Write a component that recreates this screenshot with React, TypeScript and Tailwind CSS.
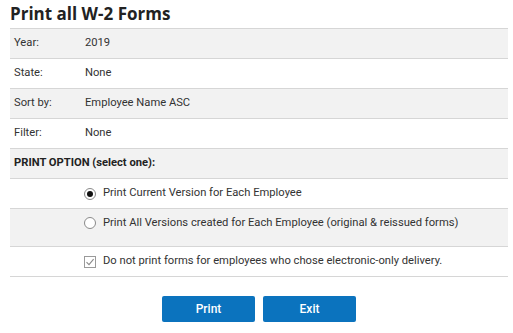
import React from 'react'

const INFO_ROWS = [
  { label: 'Year:', value: '2019' },
  { label: 'State:', value: 'None' },
  { label: 'Sort by:', value: 'Employee Name ASC' },
  { label: 'Filter:', value: 'None' },
]

function Radio({ checked }: { checked?: boolean }) {
  return (
    <span className="flex h-[12px] w-[12px] shrink-0 items-center justify-center rounded-full border border-[#8a8a8a] bg-white">
      {checked && <span className="h-[6px] w-[6px] rounded-full bg-[#111]" />}
    </span>
  )
}

function Checkbox() {
  return (
    <span className="flex h-[12px] w-[12px] shrink-0 items-center justify-center border border-[#9a9a9a] bg-white">
      <svg width="10" height="10" viewBox="0 0 10 10" fill="none">
        <path d="M1.5 5.2 L4 7.6 L8.6 2.2" stroke="#8a8a8a" strokeWidth="1.1" />
      </svg>
    </span>
  )
}

export default function App() {
  return (
    <div className="h-[333px] w-[513px] bg-white text-[#333] font-['Roboto',sans-serif] text-[11.2px]">
      <div className="ml-[10px] w-[498px]">
        <h1 className="h-[28px] pt-[4px] font-['Open_Sans',sans-serif] text-[17px] font-bold leading-[20px] text-[#222]">
          Print all W-2 Forms
        </h1>

        <div className="border-t border-[#d6d6d6]">
          {INFO_ROWS.map((r, i) => (
            <div
              key={r.label}
              className={`flex h-[30px] items-center border-b border-[#d6d6d6] px-[4px] ${i % 2 === 0 ? 'bg-[#f2f2f2]' : 'bg-white'}`}
            >
              <span className="w-[71px]">{r.label}</span>
              <span>{r.value}</span>
            </div>
          ))}

          <div className="flex h-[30px] items-center border-b border-[#d6d6d6] bg-[#f2f2f2] px-[4px] font-bold text-[#222]">
            PRINT OPTION (select one):
          </div>

          <div className="flex h-[30px] items-center gap-[7px] border-b border-[#d6d6d6] bg-white pl-[74px]">
            <Radio checked />
            <span>Print Current Version for Each Employee</span>
          </div>

          <div className="flex h-[38px] items-start gap-[7px] border-b border-[#d6d6d6] bg-[#f2f2f2] pl-[74px] pt-[7px]">
            <span className="flex h-[13px] items-center">
              <Radio />
            </span>
            <span className="leading-[13px]">Print All Versions created for Each Employee (original &amp; reissued forms)</span>
          </div>

          <div className="flex h-[30px] items-center gap-[7px] border-b border-[#d6d6d6] bg-white pl-[74px]">
            <Checkbox />
            <span>Do not print forms for employees who chose electronic-only delivery.</span>
          </div>
        </div>

        <div className="mt-[19px] flex justify-center gap-[8px]">
          <button className="h-[26px] w-[93px] rounded-[2px] bg-[#0b73be] text-[12px] font-medium text-white">
            Print
          </button>
          <button className="h-[26px] w-[93px] rounded-[2px] bg-[#0b73be] text-[12px] font-medium text-white">
            Exit
          </button>
        </div>
      </div>
    </div>
  )
}
